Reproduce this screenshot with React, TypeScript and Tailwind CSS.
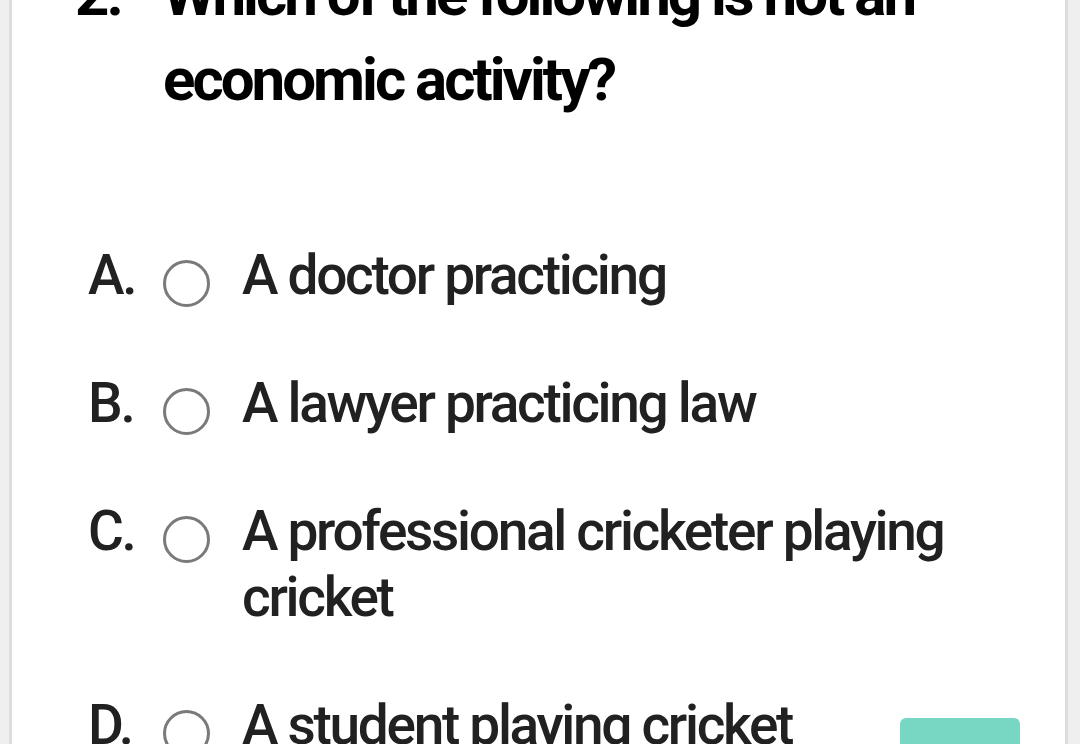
import React from 'react';

interface Option {
  key: string;
  text: string;
}

const options: Option[] = [
  { key: 'A.', text: 'A doctor practicing' },
  { key: 'B.', text: 'A lawyer practicing law' },
  { key: 'C.', text: 'A professional cricketer playing cricket' },
  { key: 'D.', text: 'A student playing cricket' },
];

const Radio = () => (
  <span className="mt-[18px] block h-[47px] w-[47px] shrink-0 rounded-full border-[3px] border-[#7a7a7a] bg-white" />
);

export default function App() {
  return (
    <div className="h-[744px] w-full overflow-hidden bg-[#efefef] font-['Roboto',sans-serif]">
      <div className="relative ml-[9px] flex h-full w-[1059px] flex-col border-x-[3px] border-[#dddddd] bg-white">
        {/* question */}
        <div className="mt-[-48px] flex pl-[63px] text-[60px] font-bold leading-[85px] tracking-[-0.05em] text-black">
          <span className="w-[88px] shrink-0">2.</span>
          <p className="w-[800px]">
            Which of the following is not an
            <br />
            economic activity?
          </p>
        </div>

        {/* options */}
        <ul className="mt-[120px] flex flex-col gap-[62px] pl-[76px] text-[55px] font-medium leading-[66px] tracking-[-0.042em] text-[#212121]">
          {options.map((o) => (
            <li key={o.key} className="flex items-start">
              <span className="w-[75px] shrink-0">{o.key}</span>
              <Radio />
              <span className="ml-[32px] w-[720px]">{o.text}</span>
            </li>
          ))}
        </ul>

        <button className="absolute left-[888px] top-[718px] h-[60px] w-[120px] rounded-[6px] bg-[#78d7c3]" />
      </div>
    </div>
  );
}
